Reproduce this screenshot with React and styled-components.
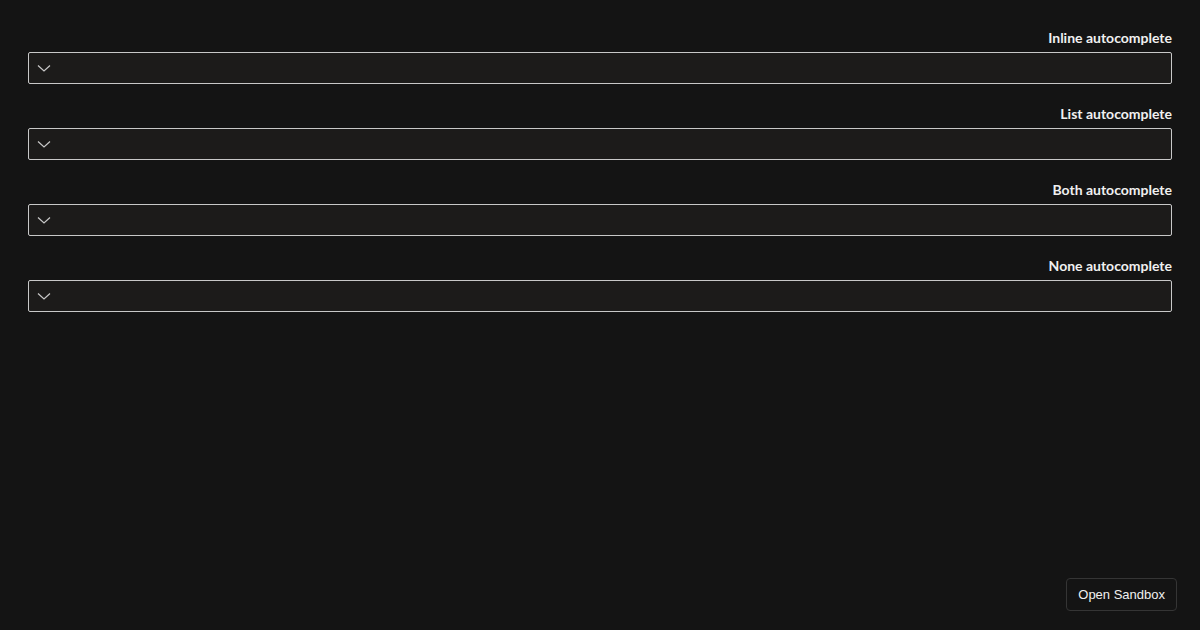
import React from "react";
import styled, { createGlobalStyle } from "styled-components";

const GlobalStyle = createGlobalStyle`
    html, body {
        margin: 0;
        padding: 0;
        background: #141414;
        height: 100%;
    }
    #root {
        min-height: 100vh;
    }
`;

const Page = styled.div`
    display: flex;
    flex-flow: column nowrap;
    gap: 20px;
    padding: 28px 28px;
    font-family: "Segoe UI", Lato, "Open Sans", sans-serif;
`;

const Field = styled.div`
    display: flex;
    flex-flow: column nowrap;
    gap: 4px;
`;

const Label = styled.label`
    align-self: flex-end;
    color: #f0f0f0;
    font-size: 14px;
    font-weight: 700;
    line-height: 20px;
`;

const Combo = styled.div`
    display: flex;
    align-items: center;
    height: 32px;
    box-sizing: border-box;
    background: #1c1b1a;
    border: 1px solid #c8c8c8;
    border-radius: 2px;
`;

const Toggle = styled.button`
    display: flex;
    align-items: center;
    justify-content: center;
    width: 30px;
    height: 30px;
    padding: 0;
    border: none;
    background: transparent;
    color: #c8c8c8;
`;

const Input = styled.input`
    flex: 1;
    height: 100%;
    border: none;
    outline: none;
    background: transparent;
    color: #f0f0f0;
    font: inherit;
    font-size: 14px;
`;

const SandboxButton = styled.button`
    position: fixed;
    right: 23px;
    bottom: 19px;
    height: 33px;
    padding: 0 11px;
    background: #141414;
    border: 1px solid #353535;
    border-radius: 4px;
    color: #f0f0f0;
    font-family: "Liberation Sans", Arial, sans-serif;
    font-size: 13px;
`;

const Chevron = () => (
    <svg width="14" height="14" viewBox="0 0 14 14" fill="none">
        <path d="M1 4.5 L7 10 L13 4.5" stroke="currentColor" strokeWidth="1.2" />
    </svg>
);

const fields = [
    "Inline autocomplete",
    "List autocomplete",
    "Both autocomplete",
    "None autocomplete"
];

const App = () => {
    return (
        <>
            <GlobalStyle />
            <Page>
                {fields.map(label => (
                    <Field key={label}>
                        <Label>{label}</Label>
                        <Combo>
                            <Toggle tabIndex={-1}>
                                <Chevron />
                            </Toggle>
                            <Input />
                        </Combo>
                    </Field>
                ))}
            </Page>
            <SandboxButton>Open Sandbox</SandboxButton>
        </>
    );
};

export default App;
